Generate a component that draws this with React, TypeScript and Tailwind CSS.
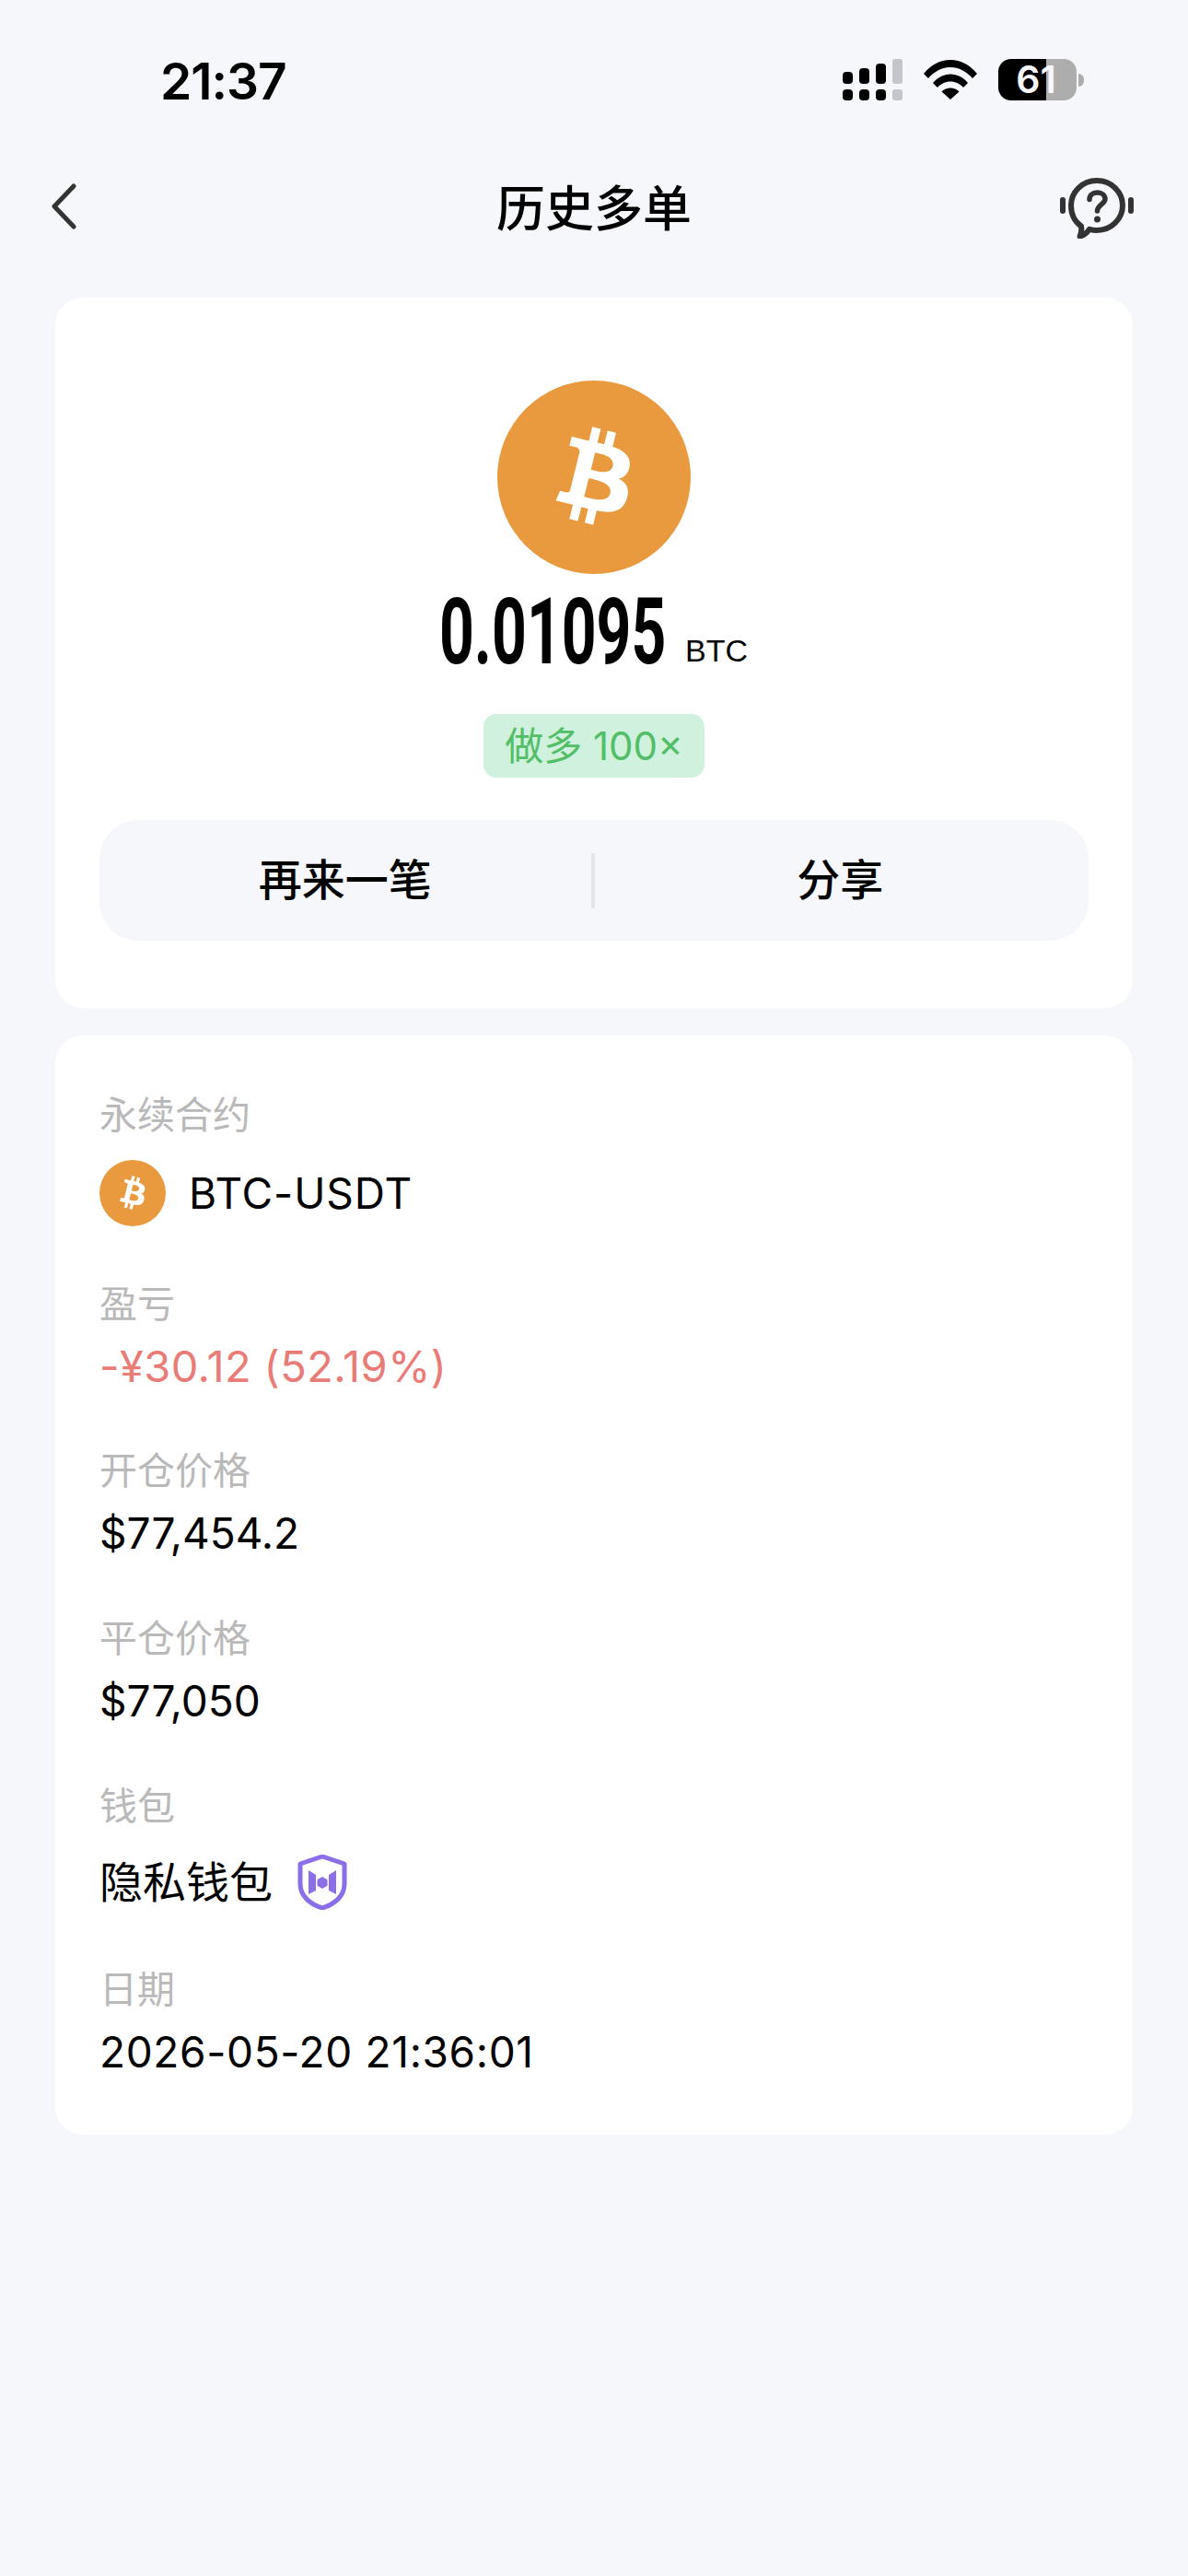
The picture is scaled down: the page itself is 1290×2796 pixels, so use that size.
import React from "react";

const B_PATH =
  "M46.11 27.441c.636-4.258-2.606-6.547-7.039-8.074l1.438-5.768-3.512-.875-1.4 5.616c-.922-.23-1.87-.447-2.812-.662l1.41-5.653-3.509-.875-1.439 5.766c-.764-.174-1.514-.346-2.242-.527l.004-.018-4.842-1.209-.934 3.75s2.605.597 2.55.634c1.422.355 1.68 1.296 1.636 2.042l-1.638 6.571c.098.025.225.061.365.117l-.37-.092-2.297 9.205c-.174.432-.615 1.08-1.609.834.035.051-2.552-.637-2.552-.637l-1.743 4.02 4.57 1.139c.85.213 1.683.436 2.502.646l-1.453 5.835 3.507.875 1.44-5.772c.957.26 1.887.5 2.797.726L27.504 50.8l3.511.875 1.453-5.823c5.987 1.133 10.49.676 12.383-4.738 1.527-4.36-.075-6.875-3.225-8.516 2.294-.531 4.022-2.04 4.483-5.157zM38.087 38.69c-1.085 4.36-8.426 2.004-10.807 1.412l1.928-7.729c2.38.594 10.011 1.77 8.88 6.317zm1.085-11.312c-.99 3.966-7.1 1.951-9.083 1.457l1.748-7.01c1.983.494 8.367 1.416 7.335 5.553z";

const CJK = "font-['Inter','Noto_Sans_CJK_SC',sans-serif]";

const BtcIcon = ({ className }: { className: string }) => (
  <svg viewBox="0 0 64 64" className={className}>
    <circle cx="32" cy="32" r="32" fill="#e99a3e" />
    <path d={B_PATH} fill="#fff" transform="translate(6.9 6.4) scale(0.8)" />
  </svg>
);

const SignalIcon = () => (
  <svg width="65" height="45" viewBox="0 0 65 45">
    <rect x="0" y="14" width="11" height="13" rx="4" fill="#000" />
    <rect x="18" y="10" width="11" height="17" rx="4" fill="#000" />
    <rect x="36" y="5" width="11" height="22" rx="4" fill="#000" />
    <rect x="54" y="0" width="11" height="27" rx="3" fill="#c4c6cc" />
    <rect x="0" y="33" width="11" height="12" rx="4" fill="#000" />
    <rect x="18" y="33" width="11" height="12" rx="4" fill="#000" />
    <rect x="36" y="33" width="11" height="12" rx="4" fill="#000" />
    <rect x="54" y="33" width="11" height="12" rx="3" fill="#c4c6cc" />
  </svg>
);

const WifiIcon = () => (
  <svg width="58" height="43" viewBox="0 0 58 43" fill="#000">
    <path d="M0 15C7.5 5.5 18 0 29 0s21.500 5.500 29 15l-5 5C46.500 12.500 38 8 29 8S11.500 12.500 5 20z" />
    <path d="M10 25c5-6 11.500-9.500 19-9.500S43 19 48 25l-5 5c-3.500-4-8.500-6.500-14-6.500S18.500 26 15 30z" />
    <path d="M19.500 34.500C22 32 25.500 30.500 29 30.500s7 1.500 9.500 4L29 43z" />
  </svg>
);

const Battery = () => (
  <div className="flex items-center">
    <div className="relative flex h-[45px] w-[85px]">
      <div className="w-[52px] rounded-l-[14px] bg-black" />
      <div className="flex-1 rounded-r-[14px] bg-[#adadad]" />
      <span className="absolute inset-0 flex items-center justify-center pr-[3px] font-['Inter',sans-serif] text-[41px] font-semibold leading-none text-[#f5f7fb]">
        61
      </span>
    </div>
    <div className="ml-[2px] h-[14px] w-[6px] rounded-r-[6px] bg-[#adadad]" />
  </div>
);

const BackIcon = () => (
  <svg width="28" height="50" viewBox="0 0 28 50" fill="none">
    <path d="M25 3 4 25l21 22" stroke="#333" strokeWidth="5" strokeLinecap="round" strokeLinejoin="round" />
  </svg>
);

const HelpIcon = () => (
  <svg width="80" height="66" viewBox="0 0 80 66" fill="none">
    <rect x="0" y="21" width="6" height="18" rx="3" fill="#333" />
    <rect x="74" y="21" width="6" height="18" rx="3" fill="#333" />
    <path
      d="M40 3C56 3 68 15.500 68 30S56 57 40 57c-3 0-5.500-.4-8-1.200C29 60 25.500 63 21.500 63.500c1.500-3 2.200-7 1.500-11C16 47.500 12 39 12 30 12 15.500 24 3 40 3z"
      stroke="#333"
      strokeWidth="6"
      strokeLinejoin="round"
    />
    <path d="M32 23.500c0-4.500 3.500-7.500 8.500-7.500S49 19 49 23c0 5.500-8.500 6.500-8.500 13" stroke="#333" strokeWidth="5.500" strokeLinecap="round" />
    <circle cx="40.500" cy="45" r="3.500" fill="#333" />
  </svg>
);

const ShieldIcon = () => (
  <svg width="54" height="60" viewBox="0 0 54 60" fill="none">
    <path
      d="M27 2 L51 10 V32 C51 45 40 54 27 58 C14 54 3 45 3 32 V10 Z"
      stroke="#8a6fe8"
      strokeWidth="5"
      strokeLinejoin="round"
    />
    <path d="M12 17l8 5v17l-8 4z" fill="#8a6fe8" />
    <path d="M42 17l-8 5v17l8 4z" fill="#8a6fe8" />
    <path d="M27 24l5.500 3.200v6.600L27 37l-5.500-3.200v-6.600z" fill="#8a6fe8" />
  </svg>
);

const Label = ({ children }: { children: React.ReactNode }) => (
  <div className="text-[41px] leading-[48px] text-[#b9b9b9]">{children}</div>
);

const App = () => {
  return (
    <div className={`min-h-[2796px] bg-[#f5f7fb] text-black ${CJK}`}>
      {/* status bar */}
      <div className="flex items-center justify-between pl-[174px] pr-[113px] pt-[64px]">
        <span className="relative top-[2px] font-['Inter',sans-serif] text-[55px] font-semibold leading-[45px] tracking-[-1px]">21:37</span>
        <div className="flex items-center gap-[23px]">
          <SignalIcon />
          <WifiIcon />
          <Battery />
        </div>
      </div>

      {/* nav */}
      <div className="relative mt-[78px] flex h-[80px] items-center justify-center">
        <div className="absolute left-[55px] top-[12px]">
          <BackIcon />
        </div>
        <h1 className="text-[53px] font-medium leading-[80px]">历史多单</h1>
        <div className="absolute right-[59px] top-[6px]">
          <HelpIcon />
        </div>
      </div>

      <div className="mt-[56px] flex flex-col gap-[30px] px-[60px]">
        {/* summary card */}
        <div className="flex h-[771px] flex-col items-center rounded-[30px] bg-white px-[48px] pt-[90px]">
          <BtcIcon className="h-[210px] w-[210px]" />
          <div className="mt-[18px] flex h-[90px] items-end justify-center">
            <span className="relative left-[-1px] w-[244px] origin-left scale-x-[0.66] whitespace-nowrap font-['Roboto',sans-serif] text-[100px] font-bold leading-[90px]">
              0.01095
            </span>
            <span className="mb-[5px] ml-[22px] font-['Liberation_Sans',sans-serif] text-[34px] leading-[40px]">BTC</span>
          </div>
          <div className="mt-[44px] flex h-[69px] w-[240px] items-center justify-center rounded-[14px] bg-[#cff1dd] text-[42px] text-[#52bf68]">
            做多 100×
          </div>
          <div className="mt-[46px] flex h-[131px] w-full items-center rounded-[42px] bg-[#f5f7fb]">
            <div className="flex-1 text-center text-[47px] font-medium">再来一笔</div>
            <div className="h-[60px] w-[4px] bg-[#e3e5ea]" />
            <div className="flex-1 pr-[3px] text-center text-[47px] font-medium">分享</div>
          </div>
        </div>

        {/* detail card */}
        <div className="flex h-[1193px] flex-col gap-[60px] rounded-[30px] bg-white px-[48px] pt-[62px]">
          <div>
            <Label>永续合约</Label>
            <div className="mt-[25px] flex items-center gap-[25px]">
              <BtcIcon className="h-[72px] w-[72px]" />
              <span className="text-[46px] leading-[58px] tracking-[0.9px]">BTC-USDT</span>
            </div>
          </div>
          <div>
            <Label>盈亏</Label>
            <div className="mt-[15px] text-[47px] leading-[58px] tracking-[0.4px] text-[#e97c77]">-¥30.12 (52.19%)</div>
          </div>
          <div>
            <Label>开仓价格</Label>
            <div className="mt-[15px] text-[46px] leading-[58px]">$77,454.2</div>
          </div>
          <div className="mt-[1px]">
            <Label>平仓价格</Label>
            <div className="mt-[15px] text-[46px] leading-[58px]">$77,050</div>
          </div>
          <div className="mt-[1px]">
            <Label>钱包</Label>
            <div className="mt-[29px] mb-[2px] flex items-center gap-[27px]">
              <span className="text-[47px] leading-[60px]">隐私钱包</span>
              <ShieldIcon />
            </div>
          </div>
          <div>
            <Label>日期</Label>
            <div className="mt-[15px] text-[46px] leading-[58px] tracking-[0.65px]">2026-05-20 21:36:01</div>
          </div>
        </div>
      </div>
    </div>
  );
};

export default App;
